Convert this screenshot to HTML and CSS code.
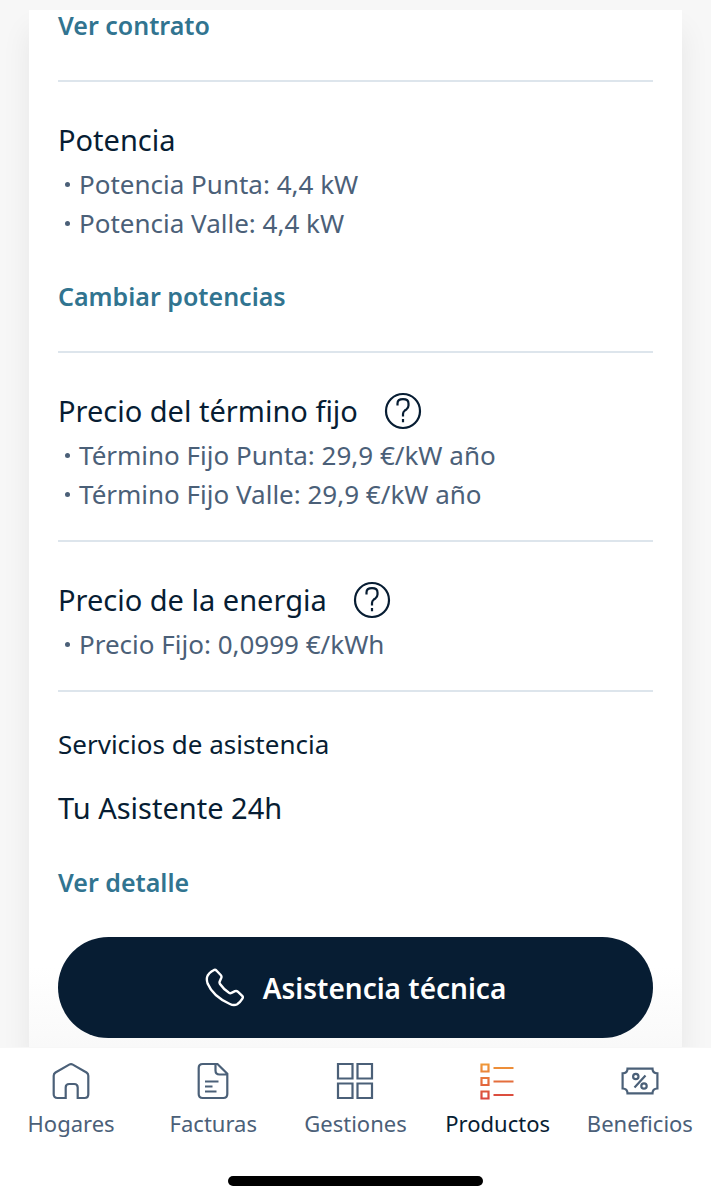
FILE: index.html
```html
<!DOCTYPE html>
<html lang="es">
<head>
<meta charset="utf-8">
<meta name="viewport" content="width=device-width, initial-scale=1">
<title>Productos</title>
<link rel="stylesheet" href="styles.css">
</head>
<body>
<div class="app">
  <main class="screen">
    <div class="card">
      <section class="section section-first">
        <a class="link" href="#">Ver contrato</a>
      </section>
      <section class="section">
        <h2 class="title">Potencia</h2>
        <ul class="list">
          <li>Potencia Punta: 4,4 kW</li>
          <li>Potencia Valle: 4,4 kW</li>
        </ul>
        <a class="link link-after-list" href="#">Cambiar potencias</a>
      </section>
      <section class="section section-short">
        <div class="heading">
          <h2 class="title">Precio del término fijo</h2>
          <button class="help" type="button" aria-label="Ayuda sobre el término fijo">
            <svg viewBox="0 0 38 38"><circle cx="19" cy="19" r="17"/><path d="M13.500 13.500v-2q0-4.300 5.500-4.300t5.500 4.300v2q0 2-2 3.800l-1.700 1.200q-1.800 1.400-1.800 3.500v2.500M19 27v3.200"/></svg>
          </button>
        </div>
        <ul class="list">
          <li>Término Fijo Punta: 29,9 €/kW año</li>
          <li>Término Fijo Valle: 29,9 €/kW año</li>
        </ul>
      </section>
      <section class="section section-short">
        <div class="heading">
          <h2 class="title">Precio de la energia</h2>
          <button class="help" type="button" aria-label="Ayuda sobre el precio de la energia">
            <svg viewBox="0 0 38 38"><circle cx="19" cy="19" r="17"/><path d="M13.500 13.500v-2q0-4.300 5.500-4.300t5.500 4.300v2q0 2-2 3.800l-1.700 1.200q-1.800 1.400-1.800 3.500v2.500M19 27v3.200"/></svg>
          </button>
        </div>
        <ul class="list">
          <li>Precio Fijo: 0,0999 €/kWh</li>
        </ul>
      </section>
      <section class="services">
        <p class="subtitle">Servicios de asistencia</p>
        <h2 class="title">Tu Asistente 24h</h2>
        <a class="link" href="#">Ver detalle</a>
        <button class="call" type="button">
          <svg class="call-icon" viewBox="0 0 40 40"><path d="M6.500 3.600 8.600 2.300q1.500-1 2.800.2l4.300 4.500q1.200 1.300.6 2.800l-1.600 3.700q-.5 1.300.3 2.500 3.800 5.500 9 8.800 1.200.7 2.500.1l3.500-1.700q1.500-.7 2.800.5l4.400 4.200q1.200 1.300.2 2.700-2.200 3.600-5.200 5.600-3.200 1.800-7.300-.2Q8 28.500 2.600 15.500 1 10.500 2.700 7.500q1.500-2.400 3.800-3.900Z"/></svg>
          <span>Asistencia técnica</span>
        </button>
      </section>
    </div>
  </main>
  <nav class="tabs">
    <a class="tab" href="#">
      <svg viewBox="0 0 40 40"><path d="M4.500 11.500 18.200 3.600q1.800-1 3.600 0l13.700 7.900q1.800 1.200 1.800 3.300v18.400q0 3.800-3.800 3.800h-6.800V26.500q0-3.500-3.500-3.500h-5q-3.500 0-3.500 3.500V37H6.500q-3.800 0-3.800-3.800V14.800q0-2.100 1.800-3.300Z"/></svg>
      <span>Hogares</span>
    </a>
    <a class="tab" href="#">
      <svg viewBox="0 0 40 40"><path d="M9.700 3h14.800l9.800 9.700v20.300q0 4-4 4H9.700q-4 0-4-4V7q0-4 4-4M22.500 3v6.500q0 4 4 4h7.800M12 20.500h13.500M12 25.500h7.500M12 30.500h11.500"/></svg>
      <span>Facturas</span>
    </a>
    <a class="tab" href="#">
      <svg viewBox="0 0 40 40"><path d="M3 3h14.500v14.500H3zM22.500 3H37v14.500H22.500zM3 22.500h14.500V37H3zM22.500 22.500H37V37H22.500z"/></svg>
      <span>Gestiones</span>
    </a>
    <a class="tab tab-active" href="#" aria-current="page">
      <svg viewBox="0 0 40 40">
        <defs><linearGradient id="warm" gradientUnits="userSpaceOnUse" x1="0" y1="2" x2="0" y2="38"><stop offset="0" stop-color="#f09a38"/><stop offset="1" stop-color="#d9443f"/></linearGradient></defs>
        <path stroke="url(#warm)" d="M3.500 3.500h7v7h-7zM3.500 17h7v7h-7zM3.500 30.500h7v7h-7zM15.500 7h20M15.500 20.500h20M15.500 34h20"/>
      </svg>
      <span>Productos</span>
    </a>
    <a class="tab" href="#">
      <svg viewBox="0 0 40 40"><path d="M7.500 7.700h25q0 4.500 4.900 4.700v15.100q-4.900.2-4.900 4.800h-25q0-4.600-4.900-4.800V12.400q4.900-.2 4.900-4.700ZM25.500 14.500 14.500 26.500"/><circle cx="15.800" cy="15.500" r="2.700"/><circle cx="24" cy="25" r="2.700"/></svg>
      <span>Beneficios</span>
    </a>
  </nav>
  <div class="home-bar"><span class="home-indicator"></span></div>
</div>
</body>
</html>
```
FILE: styles.css
```css
* { box-sizing: border-box; }

body {
  margin: 0;
  background: #fff;
  color: #071d33;
  font-family: "Noto Sans", "Open Sans", sans-serif;
}

h2, p, ul { margin: 0; padding: 0; font-weight: 400; }

a { text-decoration: none; }

button { margin: 0; padding: 0; border: 0; background: none; color: inherit; font: inherit; cursor: pointer; }

svg { display: block; fill: none; }

.app { display: flex; flex-direction: column; min-height: 100vh; }

.screen {
  flex: 1;
  padding: 10px 29px 0;
  background: #f7f7f7;
  overflow: hidden;
}

.card {
  height: 100%;
  padding: 0 29px 9px;
  background: linear-gradient(to top, #f9f9f9, #fff 80px);
  box-shadow: 0 20px 28px rgba(0, 0, 0, 0.07);
  clip-path: inset(0 -29px);
}

.section { padding: 39px 0 40px; border-bottom: 2px solid #dde5ec; }
.section-first { padding-top: 0; }
.section-short { padding-bottom: 26px; }

.heading { display: flex; align-items: center; gap: 26px; }

.title { font-size: 29px; line-height: 38px; }
.subtitle { font-size: 26px; line-height: 32px; }

.link {
  display: block;
  width: fit-content;
  color: #317490;
  font-size: 25px;
  font-weight: 600;
  line-height: 30px;
}
.link-after-list { margin-top: 38px; }

.list {
  margin-top: 6px;
  color: #4b6078;
  font-size: 26px;
  line-height: 39px;
  list-style: none;
}
.list li { display: flex; align-items: center; gap: 9px; padding-left: 7px; }
.list li::before { content: ""; width: 5px; height: 5px; border-radius: 50%; background: #4b6078; }

.help { width: 38px; height: 38px; }
.help svg { stroke: #071d33; stroke-width: 2.2; }

.services { display: flex; flex-direction: column; padding-top: 36px; }
.services .title { margin-top: 29px; }
.services .link { margin-top: 40px; }

.call {
  display: flex;
  align-items: center;
  justify-content: center;
  gap: 18px;
  height: 101px;
  margin-top: 40px;
  border-radius: 51px;
  background: #071d33;
  color: #fff;
  font-size: 28px;
  font-weight: 600;
}
.call-icon { width: 40px; height: 40px; stroke: #fff; stroke-width: 2.4; }

.tabs { display: grid; grid-template-columns: repeat(5, 1fr); padding-top: 13px; }

.tab {
  display: flex;
  flex-direction: column;
  align-items: center;
  gap: 8px;
  color: #4b6078;
  font-size: 22px;
  line-height: 28px;
}
.tab svg { width: 40px; height: 40px; stroke: currentColor; stroke-width: 2.2; }
.tab-active { color: #071d33; }

.home-bar { display: flex; justify-content: center; padding: 39px 0 14px; }
.home-indicator { width: 36%; height: 10px; border-radius: 5px; background: #000; }
```
